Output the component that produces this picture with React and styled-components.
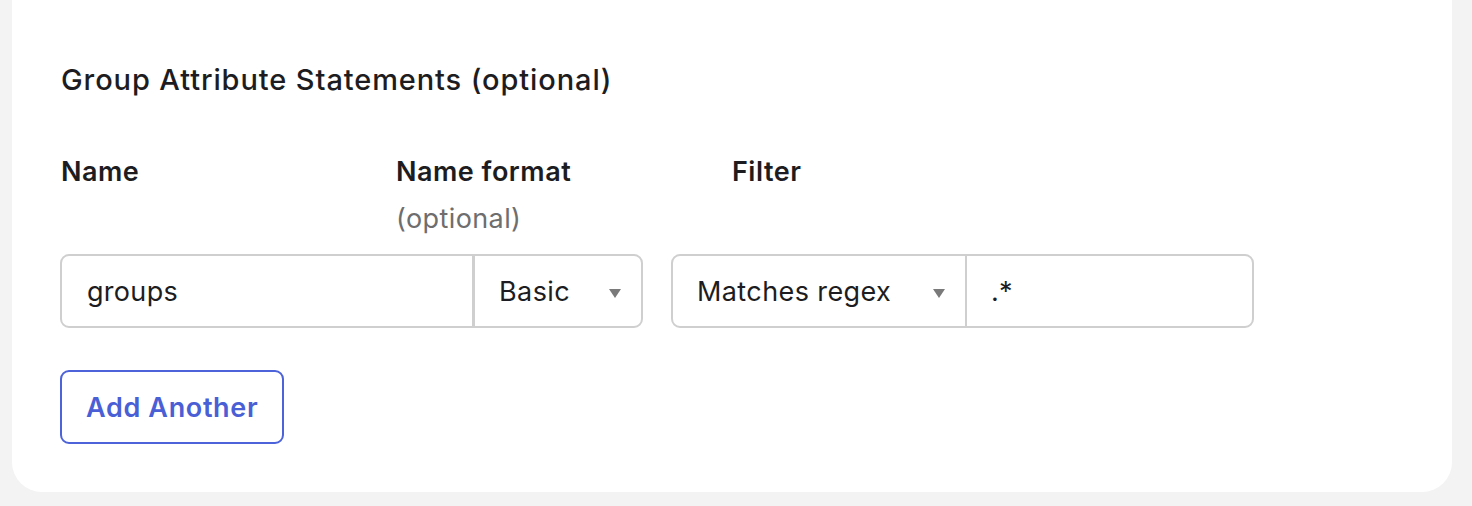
import React from "react";
import styled, { createGlobalStyle } from "styled-components";

const Global = createGlobalStyle`
  html, body { margin: 0; padding: 0; background: #f3f3f3; }
  body { font-family: Inter, "Noto Sans", sans-serif; color: #1d1d21; }
  * { box-sizing: border-box; }
`;

const Page = styled.div`
  padding: 0 20px 14px 12px;
`;

const Card = styled.section`
  background: #fff;
  border-radius: 0 0 30px 30px;
  padding: 62px 48px 48px 48px;
  width: 1440px;
`;

const Title = styled.h2`
  margin: 0 0 58px 1px;
  font-size: 29px;
  font-weight: 500;
  letter-spacing: 0.9px;
  line-height: 36px;
`;

const LabelRow = styled.div`
  display: grid;
  grid-template-columns: 335px 336px 335px;
  padding-left: 1px;
  margin-bottom: 19px;
`;

const LabelCell = styled.div`
  display: flex;
  flex-direction: column;
  gap: 15px;
`;

const Label = styled.div`
  font-size: 27px;
  font-weight: 600;
  letter-spacing: 0.5px;
  line-height: 32px;
`;

const Hint = styled.div`
  font-size: 27px;
  letter-spacing: 0.4px;
  color: #6e6e6e;
  line-height: 32px;
`;

const FieldRow = styled.div`
  display: flex;
  gap: 28px;
  margin-bottom: 42px;
`;

const Group = styled.div`
  display: flex;
  width: ${(p) => p.$w}px;
  height: 74px;
  border: 2px solid #cfcfcf;
  border-radius: 9px;
  overflow: hidden;
`;

const TextField = styled.div`
  flex: 1;
  display: flex;
  align-items: center;
  padding-left: ${(p) => p.$pad || 25}px;
  font-size: 27px;
  letter-spacing: 0.3px;
  border-left: ${(p) => (p.$divider ? `${p.$divider}px solid #cfcfcf` : "none")};
`;

const Select = styled.div`
  width: ${(p) => p.$w}px;
  display: flex;
  align-items: center;
  justify-content: space-between;
  padding: 0 ${(p) => p.$right || 20}px 0 ${(p) => p.$left || 25}px;
  font-size: 27px;
  letter-spacing: 0.4px;
  border-left: ${(p) => (p.$divider ? `${p.$divider}px solid #cfcfcf` : "none")};
`;

const Caret = styled.span`
  width: 0;
  height: 0;
  border-left: 6px solid transparent;
  border-right: 6px solid transparent;
  border-top: 9px solid #7a7a7a;
  margin-top: 4px;
`;

const AddButton = styled.button`
  height: 74px;
  padding: 0 24px;
  background: #fff;
  border: 2px solid #4d63d9;
  border-radius: 9px;
  color: #4a5fd6;
  font-family: Inter, "Noto Sans", sans-serif;
  font-size: 27px;
  font-weight: 600;
  letter-spacing: 0.65px;
`;

export default function App() {
  return (
    <>
      <Global />
      <Page>
        <Card>
          <Title>Group Attribute Statements (optional)</Title>
          <LabelRow>
            <LabelCell>
              <Label>Name</Label>
            </LabelCell>
            <LabelCell>
              <Label>Name format</Label>
              <Hint>(optional)</Hint>
            </LabelCell>
            <LabelCell>
              <Label>Filter</Label>
            </LabelCell>
          </LabelRow>
          <FieldRow>
            <Group $w={583}>
              <TextField>groups</TextField>
              <Select $w={169} $divider={3} $left={24}>
                Basic <Caret />
              </Select>
            </Group>
            <Group $w={583}>
              <Select $w={292} $left={24}>
                Matches regex <Caret />
              </Select>
              <TextField $divider={2} $pad={24}>.*</TextField>
            </Group>
          </FieldRow>
          <AddButton>Add Another</AddButton>
        </Card>
      </Page>
    </>
  );
}
